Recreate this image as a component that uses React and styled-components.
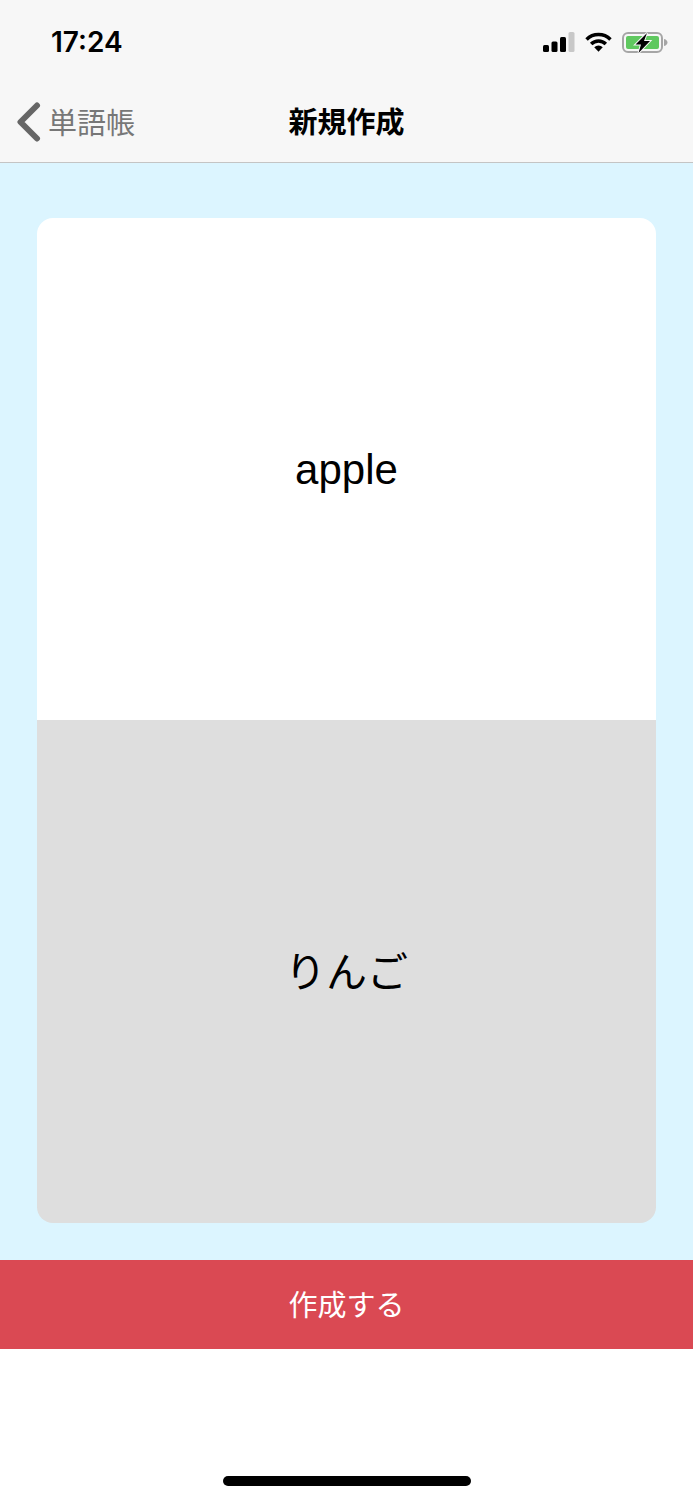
import React from "react";
import styled, { createGlobalStyle } from "styled-components";

const GlobalStyle = createGlobalStyle`
  html, body {
    margin: 0;
    padding: 0;
    background: #fff;
    font-family: "Liberation Sans", "Noto Sans CJK JP", sans-serif;
  }
`;

const SignalIcon = () => (
  <svg width="32" height="20" viewBox="0 0 32 20">
    <rect x="0" y="13" width="6" height="7" rx="1.5" fill="#000" />
    <rect x="8.5" y="9.5" width="6" height="10.5" rx="1.5" fill="#000" />
    <rect x="17" y="5" width="6" height="15" rx="1.5" fill="#000" />
    <rect x="25.5" y="0" width="6" height="20" rx="1.5" fill="#c8c8c8" />
  </svg>
);

const WifiIcon = () => (
  <svg width="27" height="20" viewBox="0 0 28 20" fill="none" stroke="#000" strokeWidth="3.6">
    <path d="M1.6 7.4 A17.5 17.5 0 0 1 26.4 7.4" />
    <path d="M6.4 12 A10.8 10.8 0 0 1 21.6 12" />
    <path d="M14 20 L9.6 15.4 A6.2 6.2 0 0 1 18.4 15.4 Z" fill="#000" stroke="none" />
  </svg>
);

const BatteryIcon = () => (
  <svg width="46" height="21" viewBox="0 0 46 21">
    <rect x="1" y="1" width="39" height="19" rx="5" fill="none" stroke="#a6a6a6" strokeWidth="2" />
    <rect x="4" y="4" width="33" height="13" rx="2" fill="#5fc85f" />
    <path d="M42 7 C44.5 7.6 45.5 9 45.5 10.5 C45.5 12 44.5 13.4 42 14 Z" fill="#a6a6a6" />
    <path
      d="M25 1 L13.5 12.5 L19 12.5 L16.5 21 L28 9 L22 9 Z"
      fill="#000"
      stroke="#f7f7f7"
      strokeWidth="2"
      paintOrder="stroke"
    />
  </svg>
);

const BackChevron = () => (
  <svg width="26" height="40" viewBox="0 0 26 40" fill="none">
    <path
      d="M21 3.5 L4.5 20 L21 36.5"
      stroke="#666"
      strokeWidth="6"
      strokeLinecap="round"
      strokeLinejoin="round"
    />
  </svg>
);

export default function App() {
  return (
    <Screen>
      <GlobalStyle />
      <Header>
        <StatusBar>
          <Time>17:24</Time>
          <StatusIcons>
            <SignalIcon />
            <WifiIcon />
            <BatteryIcon />
          </StatusIcons>
        </StatusBar>
        <NavBar>
          <BackButton>
            <BackChevron />
            <BackLabel>単語帳</BackLabel>
          </BackButton>
          <NavTitle>新規作成</NavTitle>
        </NavBar>
      </Header>
      <Content>
        <Card>
          <CardFace>apple</CardFace>
          <CardFace $back>りんご</CardFace>
        </Card>
      </Content>
      <CreateButton>作成する</CreateButton>
      <Footer>
        <HomeIndicator />
      </Footer>
    </Screen>
  );
}

const Screen = styled.div`
  width: 693px;
  height: 1500px;
  display: flex;
  flex-direction: column;
  overflow: hidden;
  background: #fff;
`;

const Header = styled.header`
  height: 163px;
  box-sizing: border-box;
  background: #f7f7f7;
  border-bottom: 1px solid #c4c4c4;
`;

const StatusBar = styled.div`
  height: 84px;
  box-sizing: border-box;
  padding: 0 25px 0 51px;
  display: flex;
  align-items: center;
  justify-content: space-between;
`;

const Time = styled.span`
  font-family: "Inter", "Liberation Sans", sans-serif;
  font-size: 28px;
  font-weight: 600;
  color: #000;
`;

const StatusIcons = styled.div`
  display: flex;
  align-items: center;
  gap: 10px;
`;

const NavBar = styled.nav`
  position: relative;
  height: 78px;
  box-sizing: border-box;
  padding-bottom: 6px;
  display: flex;
  align-items: center;
  justify-content: center;
`;

const BackButton = styled.div`
  position: absolute;
  left: 16px;
  top: 0;
  height: 100%;
  box-sizing: border-box;
  padding-bottom: 2px;
  display: flex;
  align-items: center;
  gap: 6px;
`;

const BackLabel = styled.span`
  font-size: 29px;
  color: #777;
  margin-bottom: 3px;
`;

const NavTitle = styled.h1`
  margin: 0;
  font-size: 29px;
  font-weight: 700;
  color: #000;
`;

const Content = styled.main`
  height: 1097px;
  box-sizing: border-box;
  padding: 55px 37px 37px;
  background: #dcf5ff;
`;

const Card = styled.section`
  height: 100%;
  display: flex;
  flex-direction: column;
  border-radius: 16px;
  overflow: hidden;
`;

const CardFace = styled.div`
  height: ${(p) => (p.$back ? "503px" : "502px")};
  box-sizing: border-box;
  padding: ${(p) => (p.$back ? "0 0 6px" : "2px 0 0")};
  display: flex;
  align-items: center;
  justify-content: center;
  font-size: ${(p) => (p.$back ? "41px" : "42px")};
  color: #000;
  background: ${(p) => (p.$back ? "#dedede" : "#fff")};
`;

const CreateButton = styled.button`
  height: 89px;
  border: none;
  padding: 0 0 4px;
  background: #da4953;
  color: #fff;
  font-family: inherit;
  font-size: 29px;
`;

const Footer = styled.footer`
  flex: 1;
  display: flex;
  justify-content: center;
  align-items: flex-end;
  padding-bottom: 14px;
`;

const HomeIndicator = styled.div`
  width: 248px;
  height: 10px;
  border-radius: 5px;
  background: #000;
`;
